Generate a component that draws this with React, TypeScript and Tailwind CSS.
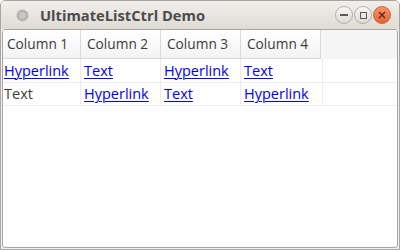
import React from "react";

const F = { fontFamily: '"Open Sans", "DejaVu Sans", sans-serif' };

function Link({ children }: { children: React.ReactNode }) {
  return <span className="text-[#0000ee] underline underline-offset-[2px] decoration-[1px]">{children}</span>;
}

export default function App() {
  const cols = ["Column 1", "Column 2", "Column 3", "Column 4"];
  const rows: [string, boolean][][] = [
    [["Hyperlink", true], ["Text", true], ["Hyperlink", true], ["Text", true]],
    [["Text", false], ["Hyperlink", true], ["Text", true], ["Hyperlink", true]],
  ];
  return (
    <div className="w-[400px] h-[250px] bg-[#f2f1f0] flex flex-col rounded-t-[5px] border border-[#a9a6a1] overflow-hidden" style={F}>
      <div className="h-[28px] shrink-0 flex items-center bg-gradient-to-b from-[#f1efec] to-[#dfdbd5] relative">
        <div className="ml-[15px] w-[13px] h-[13px] rounded-full bg-[radial-gradient(circle,#c9c8c6_30%,#a9a8a6_70%)] border border-[#d8d6d2]" />
        <div className="ml-[11px] text-[14.7px] font-bold text-[#4c4c4c] leading-none">UltimateListCtrl Demo</div>
        <div className="ml-auto mr-[8px] flex items-center gap-[1px]">
          <div className="w-[18px] h-[18px] rounded-full border border-[#b5b2ad] bg-gradient-to-b from-[#faf9f8] to-[#dcd9d4] flex items-center justify-center">
            <div className="w-[8px] h-[1.5px] bg-[#5a5a5a]" />
          </div>
          <div className="w-[18px] h-[18px] rounded-full border border-[#b5b2ad] bg-gradient-to-b from-[#faf9f8] to-[#dcd9d4] flex items-center justify-center">
            <div className="w-[7px] h-[7px] border border-[#5a5a5a]" />
          </div>
          <div className="w-[18px] h-[18px] rounded-full border border-[#d0643a] bg-gradient-to-b from-[#f7946a] to-[#ea6030] flex items-center justify-center">
            <svg width="8" height="8" viewBox="0 0 8 8"><path d="M1 1L7 7M7 1L1 7" stroke="#5a2a1a" strokeWidth="1.4" /></svg>
          </div>
        </div>
      </div>
      <div className="flex-1 mx-[1px] mb-[1px] bg-white border border-[#a8a6a2] rounded-[3px] overflow-hidden flex flex-col">
        <div className="h-[29px] flex shrink-0 bg-[#f5f5f5]">
          {cols.map((c, j) => (
            <div key={c} className={`${j === 0 ? "w-[78px] pl-[4px]" : "w-[80px] pl-[6px]"} border-r border-b border-[#d9d9d9] bg-gradient-to-b from-[#ffffff] to-[#f3f3f3] flex items-center text-[13.7px] text-[#3c3c3c]`}>
              {c}
            </div>
          ))}
          <div className="flex-1" />
        </div>
        {rows.map((r, i) => (
          <div key={i} className={`flex ${i === 0 ? "h-[24px]" : "h-[23px]"} border-b border-[#ececec]`}>
            {r.map(([t, l], j) => (
              <div key={j} className={`${j === 0 ? "w-[78px] pl-[1px]" : j === 3 ? "w-[82px] pl-[3px]" : "w-[80px] pl-[3px]"} border-r border-[#ececec] flex items-center text-[14.5px] text-[#3c3c3c]`}>
                {l ? <Link>{t}</Link> : t}
              </div>
            ))}
          </div>
        ))}
      </div>
    </div>
  );
}
